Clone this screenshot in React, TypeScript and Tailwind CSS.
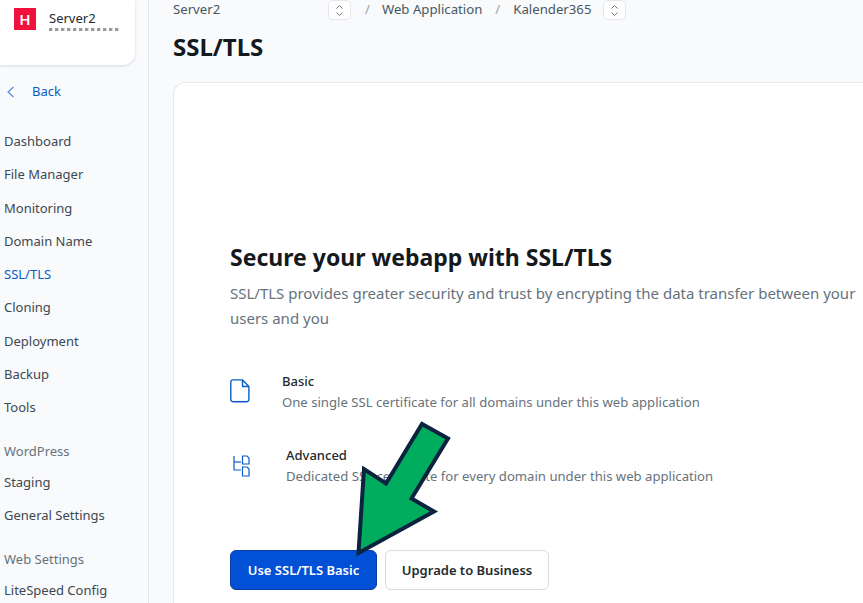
import React from "react";

const navA = ["Dashboard", "File Manager", "Monitoring", "Domain Name", "SSL/TLS", "Cloning", "Deployment", "Backup", "Tools"];

function Stepper() {
  return (
    <div className="flex h-5 w-[23px] items-center justify-center rounded-[5px] border border-[#e4e8ec] bg-white">
      <svg width="9" height="13" viewBox="0 0 9 13" fill="none" stroke="#6b7780" strokeWidth="1">
        <path d="M1.500 4.500 4.500 1.500 7.500 4.500" />
        <path d="M1.500 8.500 4.500 11.500 7.500 8.500" />
      </svg>
    </div>
  );
}

export default function App() {
  return (
    <div className="relative flex h-[603px] w-[863px] overflow-hidden bg-[#f8fafc] font-['Noto_Sans','Open_Sans',sans-serif]">
      <aside className="flex h-full w-[149px] shrink-0 flex-col border-r border-[#e3e6ea]">
        <div className="flex h-[65px] w-[135px] shrink-0 items-start gap-[13px] rounded-br-xl bg-white pl-[14px] pt-2 shadow-[0_1px_3px_rgba(15,23,42,0.14)]">
          <div className="flex h-[22px] w-[22px] items-center justify-center bg-[#f0113c] text-[15px] font-semibold leading-none text-white">H</div>
          <div className="flex flex-col">
            <span className="text-[13px] leading-[20px] text-[#222a30]">Server2</span>
            <div className="h-[3px] w-[71px] bg-[repeating-linear-gradient(90deg,#9a9a9a_0_3px,#dcdcdc_3px_4px,transparent_4px_6px)]" />
          </div>
        </div>
        <div className="mt-[17px] flex h-5 items-center pl-[6px] text-[13px] text-[#0a5cc7]">
          <svg width="9" height="14" viewBox="0 0 9 14" fill="none" stroke="#4d86d6" strokeWidth="1.1">
            <path d="M7.500 2 2 7l5.500 5" />
          </svg>
          <span className="ml-[17px]">Back</span>
        </div>
        <nav className="mt-[29px] flex flex-col pl-1 text-[13px] leading-[20px] text-[#3c4852]">
          {navA.map((n) => (
            <div key={n} className={`mb-[13.3px] ${n === "SSL/TLS" ? "text-[#0a5cc7]" : ""}`}>{n}</div>
          ))}
          <div className="mt-[10.5px] mb-[11px] text-[#66727c]">WordPress</div>
          <div className="mb-[13px]">Staging</div>
          <div className="mb-[14px]">General Settings</div>
          <div className="mt-[10px] mb-[11px] text-[#66727c]">Web Settings</div>
          <div>LiteSpeed Config</div>
        </nav>
      </aside>
      <main className="flex min-w-0 flex-1 flex-col pl-6">
        <div className="flex h-5 items-center text-[13.2px] text-[#4a5660]">
          <span className="w-[155px]">Server2</span>
          <Stepper />
          <span className="ml-[14px] text-[#9aa3aa]">/</span>
          <span className="ml-[12px]">Web Application</span>
          <span className="ml-[13px] text-[#9aa3aa]">/</span>
          <span className="ml-[13px]">Kalender365</span>
          <span className="ml-[12px]"><Stepper /></span>
        </div>
        <h1 className="mt-[7px] text-[24px] font-bold leading-[40px] text-[#14191e]">SSL/TLS</h1>
        <section className="mt-[15px] flex flex-1 flex-col rounded-tl-xl border border-r-0 border-b-0 border-[#e6e9ec] bg-white pl-[56px] pt-[156px]">
          <h2 className="text-[23px] font-bold leading-[36px] text-[#14191e]">Secure your webapp with SSL/TLS</h2>
          <p className="mt-[6px] w-[640px] text-[15px] leading-[25px] text-[#66727c]">SSL/TLS provides greater security and trust by encrypting the data transfer between your users and you</p>
          <div className="mt-[40px] flex items-start">
            <svg className="mt-[8px]" width="20" height="24" viewBox="0 0 20 24" fill="none" stroke="#0a5cc7" strokeWidth="1.4" strokeLinejoin="round">
              <path d="M3 .9h9.500L18.900 7.500V20.500a2.200 2.200 0 0 1-2.200 2.200H3a2.200 2.200 0 0 1-2.200-2.200V3A2.200 2.200 0 0 1 3 .9Z" />
              <path d="M12.500 .9V7.500H18.900" />
            </svg>
            <div className="ml-[32px] flex flex-col">
              <span className="text-[13px] font-medium leading-[20px] text-[#222a30]">Basic</span>
              <span className="mt-[1px] text-[13.13px] leading-[20px] text-[#66727c]">One single SSL certificate for all domains under this web application</span>
            </div>
          </div>
          <div className="mt-[33px] flex items-start">
            <svg className="ml-[3px] mt-[10px]" width="17" height="22" viewBox="0 0 17 22" fill="none" stroke="#0a5cc7" strokeWidth="1.200">
              <path d="M1 1v14h7" />
              <path d="M1 7h7" />
              <path d="M9.500 1h4.500l2 2v6h-6.500z" />
              <path d="M9.500 12h4.500l2 2v7h-6.500z" />
            </svg>
            <div className="ml-[36px] flex flex-col">
              <span className="text-[13px] font-medium leading-[20px] text-[#222a30]">Advanced</span>
              <span className="mt-[1px] text-[13.13px] leading-[20px] text-[#66727c]">Dedicated SSL certificate for every domain under this web application</span>
            </div>
          </div>
          <div className="mt-[64px] flex gap-2">
            <button className="h-10 w-[147px] rounded-md border border-[#0a3f9e] bg-[#0250d6] pt-px text-[13px] font-semibold text-white">Use SSL/TLS Basic</button>
            <button className="h-10 w-[164px] rounded-md border border-[#d8dce0] bg-white pt-px text-[13px] font-semibold text-[#222a30]">Upgrade to Business</button>
          </div>
        </section>
      </main>
      <svg className="pointer-events-none absolute left-0 top-0" width="863" height="603" viewBox="0 0 863 603">
        <path d="M358.500 553 364 469 386 483.500 422 424 448 438.500 411.500 498.500 434 511.500Z" fill="#00ad5f" stroke="#0c2340" strokeWidth="4" strokeLinejoin="miter" />
      </svg>
    </div>
  );
}
